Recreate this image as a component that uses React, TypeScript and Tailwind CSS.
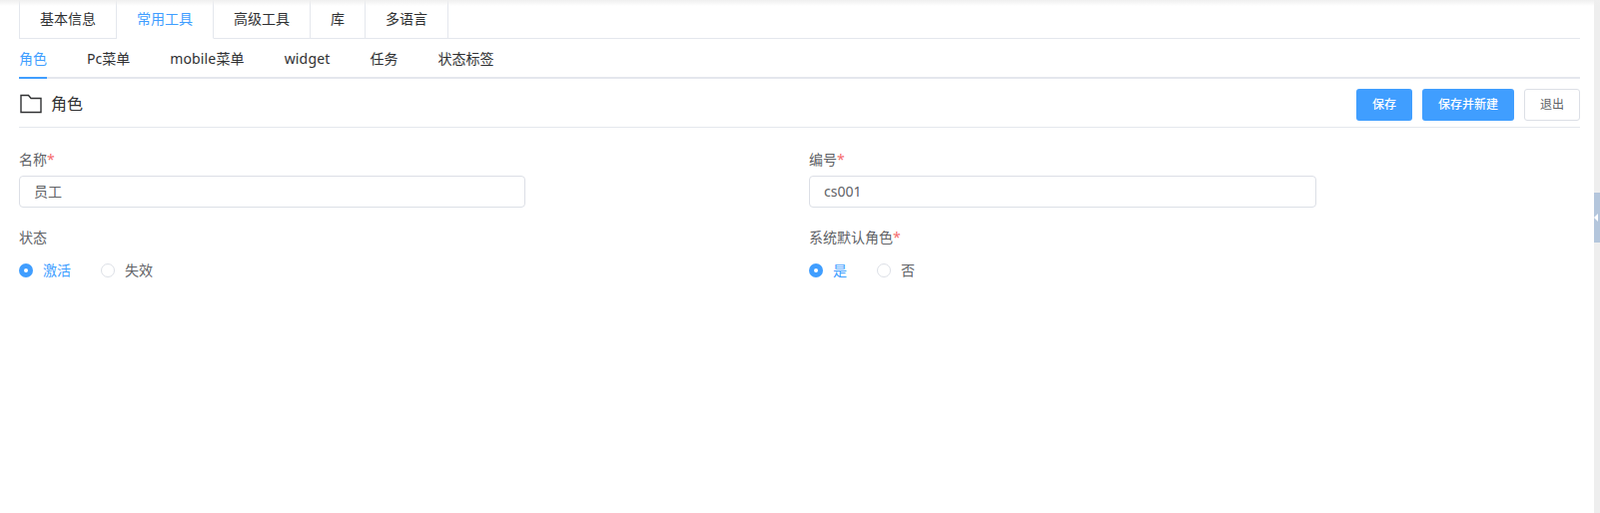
const fontStack = { fontFamily: '"Noto Sans", "Noto Sans CJK SC", sans-serif' };

const mainTabs = ["基本信息", "常用工具", "高级工具", "库", "多语言"];
const subTabs = ["角色", "Pc菜单", "mobile菜单", "widget", "任务", "状态标签"];

function Label({ text, required }: { text: string; required?: boolean }) {
  return (
    <div className="h-[20px] text-[14px] leading-[20px] text-[#606266]">
      {text}
      {required && <span className="text-[#f56c6c]">*</span>}
    </div>
  );
}

function Radio({ text, checked, width }: { text: string; checked?: boolean; width: string }) {
  return (
    <label className={`flex items-center ${width}`}>
      {checked ? (
        <span className="flex h-[14px] w-[14px] items-center justify-center rounded-full bg-[#409eff]">
          <span className="h-[4px] w-[4px] rounded-full bg-white" />
        </span>
      ) : (
        <span className="h-[14px] w-[14px] rounded-full border border-[#dcdfe6] bg-white" />
      )}
      <span className={`ml-[10px] text-[14px] leading-[20px] ${checked ? "text-[#409eff]" : "text-[#606266]"}`}>
        {text}
      </span>
    </label>
  );
}

function TextField({ value, width }: { value: string; width: string }) {
  return (
    <input
      readOnly
      value={value}
      className={`mt-[6px] block h-[32px] rounded-[4px] border border-[#dcdfe6] bg-white pb-[2px] pl-[14px] pr-[15px] text-[14px] text-[#606266] outline-none ${width}`}
    />
  );
}

export default function App() {
  return (
    <div className="relative flex h-[514px] w-[1602px] overflow-hidden bg-white" style={fontStack}>
      {/* top shadow */}
      <div className="absolute left-0 right-0 top-0 h-[6px] bg-gradient-to-b from-[#efefef] to-white/0" />

      <div className="w-[1596px] pl-[19px] pr-[14px]">
        {/* main tabs */}
        <div className="flex h-[39px] border-b border-[#e4e7ed]">
          <div className="flex border-l border-[#e4e7ed]">
            {mainTabs.map((tab, i) => (
              <div
                key={tab}
                className={`h-[39px] border-r border-[#e4e7ed] px-[20px] text-[14px] leading-[38px] ${
                  i === 1 ? "border-b border-b-white text-[#409eff]" : "text-[#303133]"
                }`}
              >
                {tab}
              </div>
            ))}
          </div>
        </div>

        {/* sub tabs */}
        <div className="flex h-[40px] gap-[40px] border-b-2 border-[#e4e7ed]">
          {subTabs.map((tab, i) => (
            <div
              key={tab}
              className={`h-[40px] text-[14px] leading-[40px] ${
                i === 0 ? "border-b-2 border-[#409eff] text-[#409eff]" : "text-[#303133]"
              } ${i === 2 || i === 3 ? "tracking-[0.15px]" : ""}`}
            >
              {tab}
            </div>
          ))}
        </div>

        {/* title bar */}
        <div className="flex h-[49px] items-center justify-between border-b border-[#e4e7ed] pt-[4px]">
          <div className="mb-[2px] flex items-center">
            <svg width="22" height="20" viewBox="0 0 22 20" fill="none" className="ml-[1px]">
              <path d="M1 1.5h7.5l2.5 3h10v14H1z" stroke="#303133" strokeWidth="1.4" />
            </svg>
            <span className="ml-[9px] text-[16px] text-[#303133]">角色</span>
          </div>
          <div className="flex gap-[10px]">
            <button className="h-[32px] w-[56px] rounded-[3px] bg-[#409eff] text-[12px] font-medium text-white">保存</button>
            <button className="h-[32px] w-[92px] rounded-[3px] bg-[#409eff] text-[12px] font-medium text-white">保存并新建</button>
            <button className="h-[32px] w-[56px] rounded-[3px] border border-[#dcdfe6] bg-white text-[12px] text-[#606266]">
              退出
            </button>
          </div>
        </div>

        {/* form */}
        <div className="grid grid-cols-[791px_1fr] pt-[22px]">
          <div>
            <Label text="名称" required />
            <TextField value="员工" width="w-[507px]" />
            <div className="mt-[20px]">
              <Label text="状态" />
            </div>
            <div className="mt-[13px] flex">
              <Radio text="激活" checked width="w-[82px]" />
              <Radio text="失效" width="w-[52px]" />
            </div>
          </div>
          <div>
            <Label text="编号" required />
            <TextField value="cs001" width="w-[508px]" />
            <div className="mt-[20px]">
              <Label text="系统默认角色" required />
            </div>
            <div className="mt-[13px] flex">
              <Radio text="是" checked width="w-[68px]" />
              <Radio text="否" width="w-[38px]" />
            </div>
          </div>
        </div>
      </div>

      {/* right gutter with collapse handle */}
      <div className="w-[6px] bg-[#eeeeee] pt-[193px]">
        <div className="flex h-[50px] w-[6px] items-center bg-[#b4c6dc]">
          <span className="h-0 w-0 border-y-[4px] border-r-[4px] border-y-transparent border-r-white" />
        </div>
      </div>
    </div>
  );
}
